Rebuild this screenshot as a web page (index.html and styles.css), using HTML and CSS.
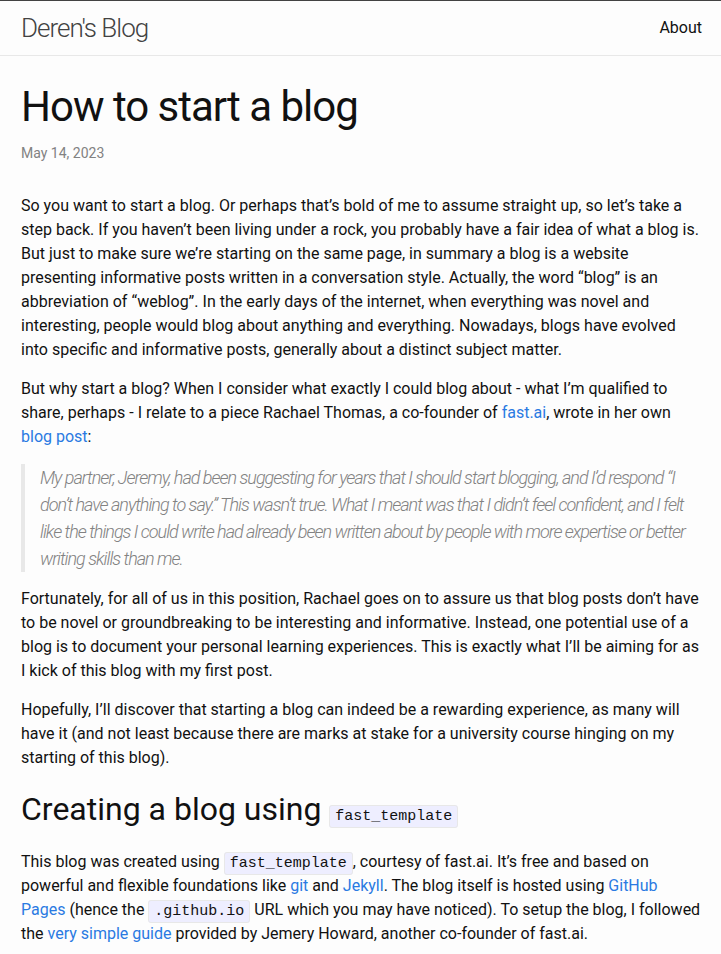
FILE: index.html
```html
<!DOCTYPE html>
<html lang="en">
<head>
<meta charset="utf-8">
<title>How to start a blog | Deren's Blog</title>
<link rel="stylesheet" href="styles.css">
</head>
<body>
<header class="site-header">
  <div class="wrapper header-row">
    <a class="site-title" href="#">Deren's Blog</a>
    <nav class="site-nav"><a class="page-link" href="#">About</a></nav>
  </div>
</header>
<main class="page-content">
  <div class="wrapper">
    <article class="post">
      <header class="post-header">
        <h1 class="post-title">How to start a blog</h1>
        <p class="post-meta">May 14, 2023</p>
      </header>
      <div class="post-content">
        <p>So you want to start a blog. Or perhaps that’s bold of me to assume straight up, so let’s take a step back. If you haven’t been living under a rock, you probably have a fair idea of what a blog is. But just to make sure we’re starting on the same page, in summary a blog is a website presenting informative posts written in a conversation style. Actually, the word “blog” is an abbreviation of “weblog”. In the early days of the internet, when everything was novel and interesting, people would blog about anything and everything. Nowadays, blogs have evolved into specific and informative posts, generally about a distinct subject matter.</p>
        <p>But why start a blog? When I consider what exactly I could blog about - what I’m qualified to share, perhaps - I relate to a piece Rachael Thomas, a co-founder of <a href="#">fast.ai</a>, wrote in her own <a href="#">blog post</a>:</p>
        <blockquote><p>My partner, Jeremy, had been suggesting for years that I should start blogging, and I’d respond “I don’t have anything to say.” This wasn’t true. What I meant was that I didn’t feel confident, and I felt like the things I could write had already been written about by people with more expertise or better writing skills than me.</p></blockquote>
        <p>Fortunately, for all of us in this position, Rachael goes on to assure us that blog posts don’t have to be novel or groundbreaking to be interesting and informative. Instead, one potential use of a blog is to document your personal learning experiences. This is exactly what I’ll be aiming for as I kick of this blog with my first post.</p>
        <p>Hopefully, I’ll discover that starting a blog can indeed be a rewarding experience, as many will have it (and not least because there are marks at stake for a university course hinging on my starting of this blog).</p>
        <h2>Creating a blog using <code>fast_template</code></h2>
        <p>This blog was created using <code>fast_template</code>, courtesy of fast.ai. It’s free and based on powerful and flexible foundations like <a href="#">git</a> and <a href="#">Jekyll</a>. The blog itself is hosted using <a href="#">GitHub Pages</a> (hence the <code>.github.io</code> URL which you may have noticed). To setup the blog, I followed the <a href="#">very simple guide</a> provided by Jemery Howard, another co-founder of fast.ai.</p>
      </div>
    </article>
  </div>
</main>
</body>
</html>
```

FILE: styles.css
```css
html, body {
  margin: 0;
  padding: 0;
}
body {
  background: #fdfdfd;
  color: #111;
  font-family: Roboto, "Liberation Sans", sans-serif;
  font-size: 16px;
  line-height: 1.5;
}
a {
  color: #2a7ae2;
  text-decoration: none;
}
.wrapper {
  padding: 0 19px 0 21px;
}
.site-header {
  border-top: 1px solid #424242;
  border-bottom: 1px solid #e8e8e8;
}
.header-row {
  display: flex;
  justify-content: space-between;
  align-items: center;
  height: 54px;
}
.site-title {
  font-size: 26px;
  font-weight: 300;
  letter-spacing: -1px;
  color: #424242;
  line-height: 54px;
}
.page-link {
  color: #111;
  line-height: 56px;
}
.page-content {
  padding: 30px 0;
}
.post-header {
  margin-bottom: 30px;
}
.post-title {
  font-size: 42px;
  font-weight: 400;
  letter-spacing: -1px;
  line-height: 1;
  margin: 0 0 15px;
}
.post-meta {
  font-size: 14px;
  color: #828282;
  margin: 0;
}
.post-content p {
  margin: 0 0 15px;
}
.post-content h2 {
  font-size: 32px;
  font-weight: 400;
  line-height: 1.25;
  letter-spacing: 0;
  margin: 0 0 21px;
  padding-top: 4px;
}
blockquote {
  margin: 0 0 15px;
  color: #828282;
  border-left: 4px solid #e8e8e8;
  padding-left: 15px;
  font-size: 18px;
  letter-spacing: -1px;
  font-style: italic;
  font-weight: 300;
}
blockquote p {
  margin: 0;
}
code {
  font-family: "Liberation Mono", monospace;
  font-size: 15px;
  line-height: 1;
  background: #eeeeff;
  border: 1px solid #e8e8e8;
  border-radius: 3px;
  padding: 2px 5px;
}
```
